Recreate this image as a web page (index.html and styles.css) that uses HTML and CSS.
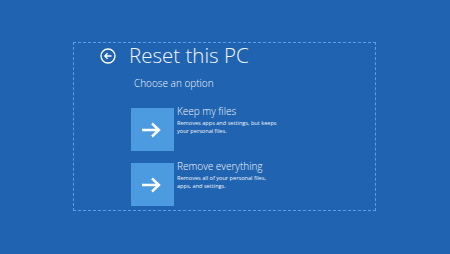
FILE: index.html
```html
<!DOCTYPE html>
<html lang="en">
<head>
    <meta charset="UTF-8">
    <title>Reset this PC</title>
    <link rel="stylesheet" href="styles.css">
</head>
<body>
    <div class="frame">
        <!-- header -->
        <div class="header">
            <svg class="back" width="16" height="16" viewBox="0 0 16 16">
                <circle cx="8" cy="8" r="7" fill="none" stroke="#fff" stroke-width="1.3"/>
                <path d="M11.5 8 H4.8 M7.6 5.2 L4.8 8 L7.6 10.8" fill="none" stroke="#fff" stroke-width="1.3"/>
            </svg>
            <h1 class="title">Reset this PC</h1>
        </div>

        <p class="subtitle">Choose an option</p>

        <!-- options -->
        <div class="options">
            <div class="option">
                <div class="tile">
                    <svg width="20" height="16" viewBox="0 0 20 16">
                        <path d="M1 8 H18 M11 1.5 L18 8 L11 14.5" fill="none" stroke="#fff" stroke-width="2.4"/>
                    </svg>
                </div>
                <div class="option-text">
                    <div class="option-name">Keep my files</div>
                    <div class="option-desc">Removes apps and settings, but keeps<br>your personal files.</div>
                </div>
            </div>
            <div class="option">
                <div class="tile">
                    <svg width="20" height="16" viewBox="0 0 20 16">
                        <path d="M1 8 H18 M11 1.5 L18 8 L11 14.5" fill="none" stroke="#fff" stroke-width="2.4"/>
                    </svg>
                </div>
                <div class="option-text">
                    <div class="option-name">Remove everything</div>
                    <div class="option-desc">Removes all of your personal files,<br>apps, and settings.</div>
                </div>
            </div>
        </div>
    </div>
</body>
</html>
```

FILE: styles.css
```css
body {
    margin: 0;
    height: 100vh;
    background: #2063b0;
    font-family: "Open Sans", "Liberation Sans", sans-serif;
    color: #f2f6fb;
    overflow: hidden;
}

.frame {
    box-sizing: border-box;
    margin: 42px 0 0 73px;
    width: 303px;
    height: 169px;
    border: 1px dashed #5a9fe2;
    padding: 0 0 0 26px;
}

.header {
    display: flex;
    align-items: flex-start;
    gap: 13px;
}

.back {
    display: block;
    margin-top: 5px;
}

.title {
    margin: 2px 0 0;
    font-size: 20.5px;
    font-weight: 300;
    line-height: 20px;
}

.subtitle {
    margin: 11px 0 0 34px;
    font-size: 10px;
    font-weight: 300;
    line-height: 14px;
}

.options {
    display: flex;
    flex-direction: column;
    gap: 12px;
    margin: 18px 0 0 31px;
}

.option {
    display: flex;
    gap: 3px;
}

.tile {
    width: 43px;
    height: 43px;
    background: #4c9be0;
    display: flex;
    align-items: center;
    justify-content: center;
}

.tile svg {
    margin-left: -4px;
}

.option-name {
    font-size: 10px;
    font-weight: 300;
    line-height: 12px;
    margin-top: -3px;
}

.option-desc {
    font-size: 5.6px;
    line-height: 8px;
    margin-top: 2px;
}
```
